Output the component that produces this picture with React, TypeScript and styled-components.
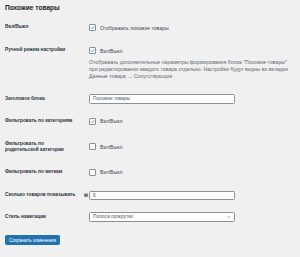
import React from 'react';
import styled, { createGlobalStyle } from 'styled-components';

const GlobalStyle = createGlobalStyle`
  html, body {
    margin: 0;
    padding: 0;
    background: #f0f0f1;
  }
  body {
    font-family: 'Liberation Sans', Arial, sans-serif;
    color: #1d2327;
  }
`;

const Page = styled.div`
  padding: 0 5px;
  width: 290px;
  box-sizing: border-box;
`;

const Title = styled.h2`
  margin: 3px 0 4px;
  font-size: 6.6px;
  line-height: 9px;
  font-weight: 600;
  color: #1d2327;
`;

const Table = styled.div`
  display: flex;
  flex-direction: column;
`;

const Row = styled.div<{ $pt: number; $pb: number; $center?: boolean }>`
  display: grid;
  grid-template-columns: 84px 146px;
  align-items: ${(p) => (p.$center ? 'center' : 'start')};
  padding: ${(p) => p.$pt}px 0 ${(p) => p.$pb}px;
`;

const Label = styled.div`
  display: flex;
  align-items: center;
  justify-content: space-between;
  padding-right: 1px;
  font-size: 4.8px;
  line-height: 6px;
  font-weight: 700;
  color: #2c3338;
`;

const HelpIcon = styled.span`
  display: inline-flex;
  align-items: center;
  justify-content: center;
  width: 4px;
  height: 4px;
  border-radius: 50%;
  background: #50575e;
  color: #fff;
  font-size: 3px;
  line-height: 4px;
  font-weight: 700;
`;

const Cell = styled.div`
  display: flex;
  flex-direction: column;
`;

const CheckLine = styled.label`
  display: flex;
  align-items: center;
  gap: 4px;
  font-size: 5.1px;
  line-height: 6px;
  color: #3c434a;
  white-space: nowrap;
`;

const Box = styled.span`
  display: inline-flex;
  align-items: center;
  justify-content: center;
  width: 5px;
  height: 5px;
  border: 0.6px solid #8c8f94;
  border-radius: 1px;
  background: #fff;
  box-sizing: content-box;
`;

const Description = styled.p`
  margin: 5px 0 0;
  font-size: 5.2px;
  line-height: 7px;
  color: #646970;
  white-space: nowrap;
`;

const TextInput = styled.div`
  display: flex;
  align-items: center;
  justify-content: space-between;
  height: 9.5px;
  padding: 0 3px;
  border: 0.6px solid #8c8f94;
  border-radius: 1.5px;
  background: #fff;
  font-size: 4.8px;
  color: #50575e;
  box-sizing: border-box;
`;

const Chevron = styled.svg`
  width: 4px;
  height: 4px;
`;

const SaveButton = styled.button`
  margin-top: 7px;
  height: 10px;
  width: 55px;
  padding: 0;
  border: 0.6px solid #2271b1;
  border-radius: 1.5px;
  background: #2271b1;
  color: #fff;
  font-family: 'Liberation Sans', Arial, sans-serif;
  font-size: 4.6px;
  line-height: 9px;
`;

const Checkbox: React.FC<{ checked?: boolean; text: string }> = ({ checked, text }) => (
  <CheckLine>
    <Box>
      {checked && (
        <svg width="5" height="5" viewBox="0 0 10 10">
          <path d="M2 5.2 L4.2 7.4 L8.2 2.6" fill="none" stroke="#3582c4" strokeWidth="1.6" />
        </svg>
      )}
    </Box>
    {text}
  </CheckLine>
);

export default function App() {
  return (
    <Page>
      <GlobalStyle />
      <Title>Похожие товары</Title>
      <Table>
        <Row $pt={8} $pb={8}>
          <Label>Вкл/Выкл</Label>
          <Cell>
            <Checkbox checked text="Отображать похожие товары" />
          </Cell>
        </Row>
        <Row $pt={8} $pb={8}>
          <Label>Ручной режим настройки</Label>
          <Cell>
            <Checkbox checked text="Вкл/Выкл" />
            <Description>
              Отображать дополнительные параметры формирования блока "Похожие товары"
              <br />
              при редактировании каждого товара отдельно. Настройки будут видны во вкладке
              <br />
              Данные товара → Сопутствующие
            </Description>
          </Cell>
        </Row>
        <Row $pt={6} $pb={6} $center>
          <Label>Заголовок блока</Label>
          <TextInput>Похожие товары</TextInput>
        </Row>
        <Row $pt={8} $pb={8}>
          <Label>Фильтровать по категориям</Label>
          <Checkbox checked text="Вкл/Выкл" />
        </Row>
        <Row $pt={8} $pb={8} $center>
          <Label>
            Фильтровать по
            <br />
            родительской категории
          </Label>
          <Checkbox text="Вкл/Выкл" />
        </Row>
        <Row $pt={8} $pb={8}>
          <Label>Фильтровать по меткам</Label>
          <Checkbox text="Вкл/Выкл" />
        </Row>
        <Row $pt={7} $pb={6} $center>
          <Label>
            Сколько товаров показывать
            <HelpIcon>?</HelpIcon>
          </Label>
          <TextInput>6</TextInput>
        </Row>
        <Row $pt={6} $pb={6} $center>
          <Label>Стиль навигации</Label>
          <TextInput>
            Полоса прокрутки
            <Chevron viewBox="0 0 10 10">
              <path d="M2 3.5 L5 6.5 L8 3.5" fill="none" stroke="#50575e" strokeWidth="1.5" />
            </Chevron>
          </TextInput>
        </Row>
      </Table>
      <SaveButton>Сохранить изменения</SaveButton>
    </Page>
  );
}
